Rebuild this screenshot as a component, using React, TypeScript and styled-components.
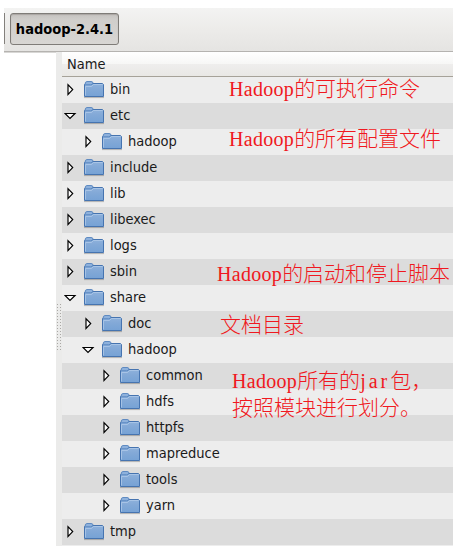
import React from 'react';
import styled, { createGlobalStyle } from 'styled-components';

const GlobalStyle = createGlobalStyle`
  *, *::before, *::after { box-sizing: border-box; }
  body { margin: 0; background: #fff; }
`;

const Page = styled.div`
  width: 459px;
  height: 552px;
  padding: 8px 6px 6px 4px;
  overflow: hidden;
  background: #fff;
`;

const Window = styled.div`
  position: relative;
  display: flex;
  flex-direction: column;
  width: 449px;
  height: 538px;
  font-family: 'DejaVu Sans Condensed', 'DejaVu Sans', sans-serif;
  font-stretch: condensed;
  font-size: 14.5px;
  color: #1a1a1a;
`;

const Toolbar = styled.div`
  flex: none;
  display: flex;
  align-items: flex-start;
  height: 44px;
  padding-top: 5px;
  background: linear-gradient(#f3f3f2, #edecea 46%, #e5e4e2);
  border-bottom: 1px solid #b5b3b0;
`;

const PreviousCrumb = styled.div`
  width: 1px;
  height: 31px;
  margin-right: 5px;
  background: #83807c;
`;

const Crumb = styled.button`
  width: 109px;
  height: 32px;
  padding: 0 0 1px;
  border: 1px solid #7f7c78;
  border-radius: 3px;
  background: linear-gradient(#c5c3c0, #d0cecb 20%, #d8d6d3);
  box-shadow: inset 0 1px 1px #aaa7a3;
  color: #000;
  font: inherit;
  font-weight: bold;
  font-size: 14.5px;
  white-space: nowrap;
`;

const Body = styled.div`
  flex: 1;
  display: flex;
  min-height: 0;
`;

const SidePane = styled.div`
  width: 52px;
  background: #fff;
  border-top: 1px solid #d8d7d5;
`;

const Splitter = styled.div`
  display: flex;
  width: 6px;
  padding: 252px 1px 0;
  background: #ebebea;
`;

const Grip = styled.div`
  width: 5px;
  height: 48px;
  background-image: radial-gradient(circle at 0.5px 0.5px, #aaa8a5 0.7px, transparent 0.8px);
  background-size: 3px 3px;
`;

const List = styled.div`
  flex: 1;
  background: #ededed;
`;

const Header = styled.div`
  height: 25px;
  padding-left: 5px;
  line-height: 24px;
  background: linear-gradient(#fff, #f7f7f6 48%, #efeeed 50%, #e9e8e5);
  border-bottom: 1px solid #a6a299;
`;

const Row = styled.div<{ $depth: number }>`
  display: flex;
  align-items: flex-start;
  height: 26px;
  padding-left: ${({ $depth }) => $depth * 18 + 2}px;

  &:nth-child(odd) { background: #dcdcdc; }
`;

const Arrow = styled.svg`
  flex: none;
  width: 14px;
  height: 14px;
  margin: 6px 5px 0 0;
`;

const Folder = styled.svg`
  flex: none;
  width: 22px;
  height: 20px;
  margin: 3px 5px 0 0;
`;

const Label = styled.span`
  height: 24px;
  line-height: 24px;
  white-space: nowrap;
`;

const Note = styled.div<{ $x: number; $y: number }>`
  position: absolute;
  left: ${({ $x }) => $x}px;
  top: ${({ $y }) => $y}px;
  color: #f01820;
  font-family: 'Liberation Serif', 'Noto Sans CJK SC', serif;
  font-stretch: normal;
  font-weight: 300;
  font-size: 21px;
  line-height: 27px;
  white-space: nowrap;
`;

const Latin = styled.span<{ $gap?: number }>`
  font-size: 20px;
  letter-spacing: ${({ $gap = 0.3 }) => $gap}px;
`;

const rows: { name: string; depth: number; open?: boolean }[] = [
  { name: 'bin', depth: 0 },
  { name: 'etc', depth: 0, open: true },
  { name: 'hadoop', depth: 1 },
  { name: 'include', depth: 0 },
  { name: 'lib', depth: 0 },
  { name: 'libexec', depth: 0 },
  { name: 'logs', depth: 0 },
  { name: 'sbin', depth: 0 },
  { name: 'share', depth: 0, open: true },
  { name: 'doc', depth: 1 },
  { name: 'hadoop', depth: 1, open: true },
  { name: 'common', depth: 2 },
  { name: 'hdfs', depth: 2 },
  { name: 'httpfs', depth: 2 },
  { name: 'mapreduce', depth: 2 },
  { name: 'tools', depth: 2 },
  { name: 'yarn', depth: 2 },
  { name: 'tmp', depth: 0 },
];

const Expander = ({ open }: { open?: boolean }) => (
  <Arrow viewBox="0 0 14 14">
    <path
      d={open ? 'M1 4.5H11L6 9.5Z' : 'M4 1.7V11.5L8.7 6.6Z'}
      fill="#fff"
      stroke="#000"
      strokeWidth="1.2"
    />
  </Arrow>
);

const FolderIcon = () => (
  <Folder viewBox="0 0 22 20">
    <defs>
      <linearGradient id="folderFace" x1="0" y1="0" x2="0" y2="1">
        <stop offset="0" stopColor="#8fb2dc" />
        <stop offset=".4" stopColor="#83a9d7" />
        <stop offset="1" stopColor="#76a2d5" />
      </linearGradient>
    </defs>
    <path d="M1 17.6H21" stroke="#000" strokeOpacity=".25" />
    <path d="M1.5 16.5V4.5L2.5 3.5H19.5L20.5 4.5V16.5Z" fill="url(#folderFace)" stroke="#4674b0" />
    <path d="M2.5 15.5V6.5H8.5L10.5 4.5H19.5" fill="none" stroke="#b2cbea" strokeOpacity=".75" />
    <path d="M2 4.5Q2 1.5 4 1.5H8Q10 1.5 10 3Q10 4.8 7.5 4.8H2.5Z" fill="#8eb1dc" stroke="#5583bd" strokeWidth=".9" />
  </Folder>
);

export default function App() {
  return (
    <Page>
      <GlobalStyle />
      <Window>
        <Toolbar>
          <PreviousCrumb />
          <Crumb>hadoop-2.4.1</Crumb>
        </Toolbar>
        <Body>
          <SidePane />
          <Splitter><Grip /></Splitter>
          <List>
            <Header>Name</Header>
            {rows.map((row, i) => (
              <Row key={i} $depth={row.depth}>
                <Expander open={row.open} />
                <FolderIcon />
                <Label>{row.name}</Label>
              </Row>
            ))}
          </List>
        </Body>
        <Note $x={225} $y={68}><Latin>Hadoop</Latin>的可执行命令</Note>
        <Note $x={225} $y={118}><Latin>Hadoop</Latin>的所有配置文件</Note>
        <Note $x={213} $y={253}><Latin>Hadoop</Latin>的启动和停止脚本</Note>
        <Note $x={216} $y={304}>文档目录</Note>
        <Note $x={228} $y={360}>
          <Latin>Hadoop</Latin>所有的<Latin $gap={3}>jar</Latin>包，<br />按照模块进行划分。
        </Note>
      </Window>
    </Page>
  );
}
